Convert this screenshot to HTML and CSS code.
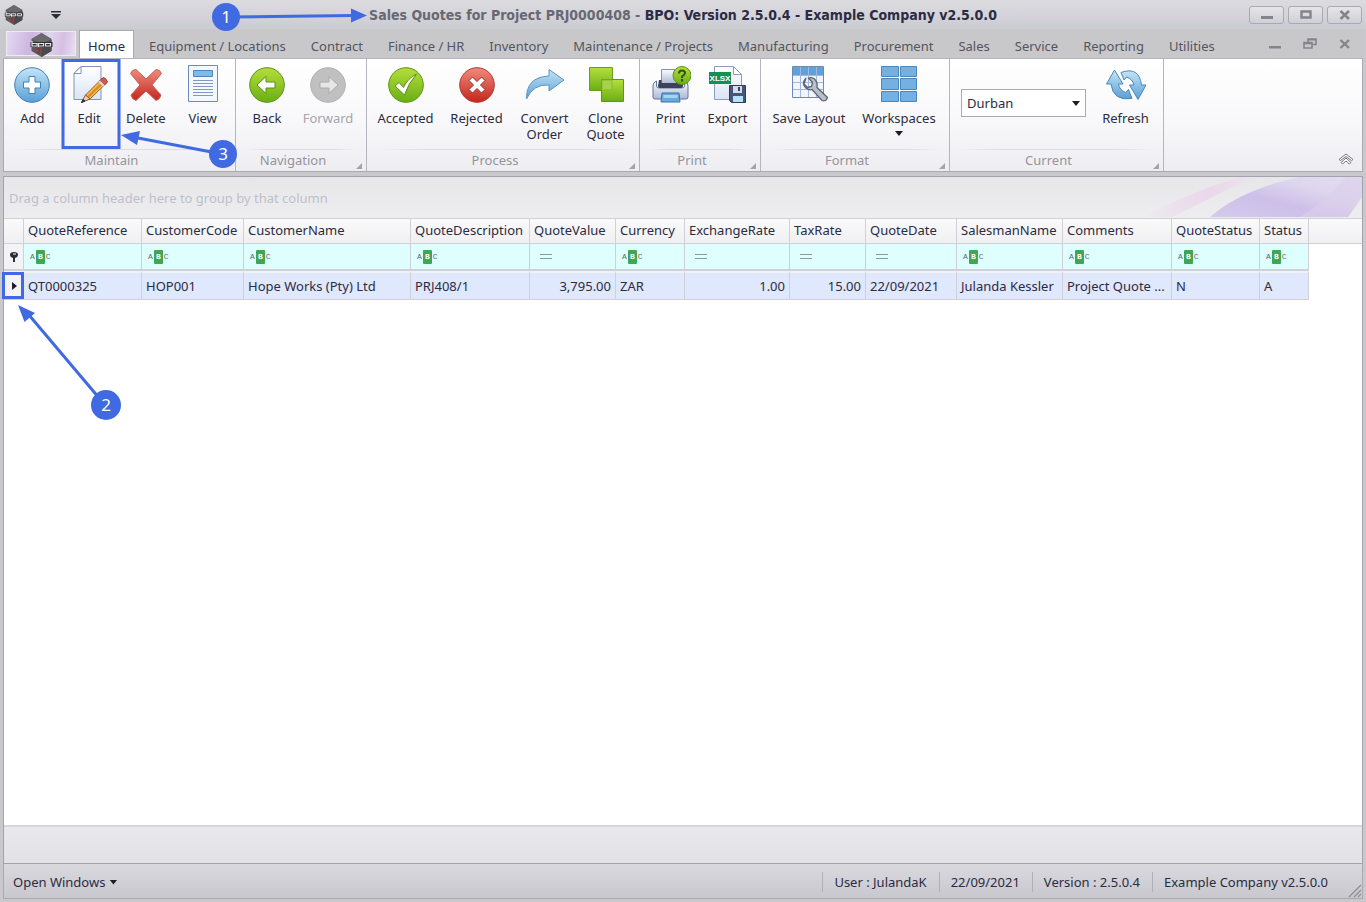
FILE: index.html
```html
<!DOCTYPE html>
<html lang="en">
<head>
    <meta charset="UTF-8">
    <meta name="viewport" content="width=device-width, initial-scale=1.0">
    <title>Sales Quotes for Project PRJ0000408</title>
    <link rel="stylesheet" href="styles.css">
</head>
<body>

<!-- shared gradients and the logo -->
<svg class="defs" width="0" height="0" aria-hidden="true">
    <defs>
        <linearGradient id="blue" x1="0" y1="0" x2="0" y2="1">
            <stop offset="0" stop-color="#c4e5f7"/><stop offset="1" stop-color="#5a9fd6"/>
        </linearGradient>
        <linearGradient id="green" x1="0" y1="0" x2="0" y2="1">
            <stop offset="0" stop-color="#b5de3c"/><stop offset="1" stop-color="#6aae14"/>
        </linearGradient>
        <linearGradient id="red" x1="0" y1="0" x2="0" y2="1">
            <stop offset="0" stop-color="#f08a7d"/><stop offset="1" stop-color="#c4261c"/>
        </linearGradient>
        <linearGradient id="paper" x1="0" y1="0" x2="0" y2="1">
            <stop offset="0" stop-color="#ffffff"/><stop offset="1" stop-color="#dbe4f4"/>
        </linearGradient>
        <linearGradient id="steel" x1="0" y1="0" x2="0" y2="1">
            <stop offset="0" stop-color="#fbfcff"/><stop offset="1" stop-color="#a9b9d6"/>
        </linearGradient>
        <symbol id="logo" viewBox="0 0 24 26">
            <path d="M12 1 22 7v12l-10 6L2 19V7z" fill="#5a5a5d"/>
            <path d="M12 1 22 7l-10 5L2 7z" fill="#6a6a6d"/>
            <path d="M12 13v12l10-6V8z" fill="#4a4a4d"/>
            <path d="M1 10h22v5H1z" fill="#2e2e31"/>
            <path d="M2.500 9v5h5v-2.500h-5M9 15v-3.500h5V14H9M16 11.500h5V14h-5z" fill="none" stroke="#e4e4e6" stroke-width="1.200"/>
            <path d="M7 17h3v4H8" fill="none" stroke="#a3272b" stroke-width="1.500"/>
        </symbol>
    </defs>
</svg>

<div class="window">
    <header class="titlebar">
        <div class="quick">
            <svg class="logo-small" width="20" height="22"><use href="#logo"/></svg>
            <button class="quick-menu" aria-label="Customize toolbar">
                <svg width="10" height="8" viewBox="0 0 10 8"><path d="M0 0h10v1.500H0zM0 3h10L5 8z" fill="#2b2b3a"/></svg>
            </button>
        </div>
        <h1><span>Sales Quotes for Project PRJ0000408 -</span> BPO: Version 2.5.0.4 - Example Company v2.5.0.0</h1>
        <div class="window-buttons">
            <button aria-label="Minimize"><svg width="14" height="12" viewBox="0 0 14 12"><path d="M1 7h12v3H1z" fill="#84848c"/></svg></button>
            <button aria-label="Maximize"><svg width="14" height="12" viewBox="0 0 14 12"><path d="M2.500 2.500h9v6h-9z" fill="none" stroke="#84848c" stroke-width="2.400"/></svg></button>
            <button aria-label="Close"><svg width="14" height="12" viewBox="0 0 14 12"><path d="M2.500 2l8.500 8m0-8l-8.500 8" stroke="#84848c" stroke-width="2.600"/></svg></button>
        </div>
    </header>

    <nav class="tabs">
        <button class="app-button" aria-label="Application menu"><svg width="25" height="26"><use href="#logo"/></svg></button>
        <a href="#" class="tab active">Home</a>
        <a href="#" class="tab">Equipment / Locations</a>
        <a href="#" class="tab">Contract</a>
        <a href="#" class="tab">Finance / HR</a>
        <a href="#" class="tab">Inventory</a>
        <a href="#" class="tab">Maintenance / Projects</a>
        <a href="#" class="tab">Manufacturing</a>
        <a href="#" class="tab">Procurement</a>
        <a href="#" class="tab">Sales</a>
        <a href="#" class="tab">Service</a>
        <a href="#" class="tab">Reporting</a>
        <a href="#" class="tab">Utilities</a>
        <div class="child-buttons">
            <button aria-label="Minimize child"><svg width="14" height="12" viewBox="0 0 14 12"><path d="M1 8h12v2.500H1z" fill="#84848c"/></svg></button>
            <button aria-label="Restore child"><svg width="14" height="12" viewBox="0 0 14 12"><path d="M5 4V1h8v5.500H9.500M1 4.500h8V10H1zM5 1.800h8M1 5.500h8" fill="none" stroke="#84848c" stroke-width="1.600"/></svg></button>
            <button aria-label="Close child"><svg width="14" height="12" viewBox="0 0 14 12"><path d="M2.500 2l8.500 8m0-8l-8.500 8" stroke="#84848c" stroke-width="2.400"/></svg></button>
        </div>
    </nav>

    <div class="ribbon">
        <section class="group maintain-group">
            <div class="items">
                <button class="btn">
                    <svg width="40" height="40" viewBox="0 0 40 40"><circle cx="20" cy="20" r="17.300" fill="url(#blue)" stroke="#4380b5"/><path d="M17 11.500h6V17h5.500v6H23v5.500h-6V23h-5.500v-6H17z" fill="#fff" stroke="#3f80b6"/></svg>
                    Add
                </button>
                <button class="btn">
                    <svg width="40" height="40" viewBox="0 0 40 40"><path d="M12 1.500h20v33H5v-26z" fill="url(#paper)" stroke="#8093b8"/><path d="M5 8.500l7-7v7z" fill="#fff" stroke="#8093b8"/><path d="M16.500 30 33 13.500l4.500 4.500L21 34z" fill="#f4b64a" stroke="#a0642a"/><path d="M19 32l16.500-16" stroke="#d98a22" stroke-width="2"/><path d="M31 15.500l3-3q3 0 4.500 4.500l-3 3z" fill="#d9574f" stroke="#9b3e40"/><path d="M29.500 17l1.500-1.500 4.500 4.500-1.500 1.500z" fill="#d7dbe6"/><path d="M16.500 30l-4 7.500 8.500-3.500z" fill="#efd2a5" stroke="#7a5a3c"/><path d="M14 34.500l-1.500 3 3.500-1.500z" fill="#2f2f38" stroke="#2f2f38"/></svg>
                    Edit
                </button>
                <button class="btn">
                    <svg width="40" height="40" viewBox="0 0 40 40"><path d="M10 4.500 20 14 30 4.500q4 0 5.500 4L26 20l9 10q-1 4.500-5 5.500L20 26l-10 9.500q-4-1-5-5.500l9-10L4.500 8.500q1.500-4 5.500-4z" fill="url(#red)" stroke="#c4605a" stroke-linejoin="round"/></svg>
                    Delete
                </button>
                <button class="btn">
                    <svg width="40" height="40" viewBox="0 0 40 40"><path d="M5.500 .500h29v36h-29z" fill="#f3f8ff" stroke="#6d8cbd"/><path d="M10.500 5.500h19v6h-19z" fill="#7fbbe6" stroke="#4f86bd"/><path d="M10 15.500h20M10 18.500h20M10 21.500h20M10 24.500h20M10 27.500h20M10 30.500h20" stroke="#8398c0"/></svg>
                    View
                </button>
            </div>
            <div class="caption">Maintain</div>
        </section>

        <section class="group nav-group">
            <div class="items">
                <button class="btn">
                    <svg width="40" height="40" viewBox="0 0 40 40"><circle cx="20" cy="20" r="17.300" fill="url(#green)" stroke="#5a9312"/><path d="M10 20l9-8.500V17h9v6h-9v5.500z" fill="#fff" stroke="#5a8f17"/></svg>
                    Back
                </button>
                <button class="btn" disabled>
                    <svg width="40" height="40" viewBox="0 0 40 40"><circle cx="20" cy="20" r="17.300" fill="#c0c0c1" stroke="#b1b1b2"/><path d="M30 20l-9-8.500V17h-9v6h9v5.500z" fill="#e6e6e7" stroke="#aaaaab"/></svg>
                    Forward
                </button>
            </div>
            <div class="caption">Navigation<i class="corner"></i></div>
        </section>

        <section class="group process-group">
            <div class="items">
                <button class="btn medium">
                    <svg width="40" height="40" viewBox="0 0 40 40"><circle cx="20" cy="20" r="17.300" fill="url(#green)" stroke="#5a9312"/><path d="M9 21l4-3.500 4.500 5q4-9 13-13.500-8.500 10-12 21z" fill="#fff" stroke="#5a8f17"/></svg>
                    Accepted
                </button>
                <button class="btn medium">
                    <svg width="40" height="40" viewBox="0 0 40 40"><circle cx="20" cy="20" r="17.300" fill="url(#red)" stroke="#b03a33"/><path d="M15.500 12l4.500 4.500 4.500-4.500 3.500 3.500-4.500 4.500 4.500 4.500-3.500 3.500-4.500-4.500-4.500 4.500-3.500-3.500 4.500-4.500-4.500-4.500z" fill="#fff" stroke="#9e2a26"/></svg>
                    Rejected
                </button>
                <button class="btn convert">
                    <svg width="40" height="40" viewBox="0 0 40 40"><path d="M1.500 34Q1 12 24 11V4.500L39 15 24 26v-6Q8 19 1.500 34z" fill="url(#blue)" stroke="#5b94c0"/></svg>
                    Convert Order
                </button>
                <button class="btn">
                    <svg width="40" height="40" viewBox="0 0 40 40"><path d="M3.500 2.500h23v23h-23z" fill="url(#green)" stroke="#6a9e1c"/><path d="M15.500 14.500h22v22h-22z" fill="url(#green)" stroke="#5f9714"/><path d="M16 15h10v10H16z" fill="#a4d24a" stroke="#86bb2e"/></svg>
                    Clone Quote
                </button>
            </div>
            <div class="caption">Process<i class="corner"></i></div>
        </section>

        <section class="group print-group">
            <div class="items">
                <button class="btn">
                    <svg width="40" height="40" viewBox="0 0 40 40"><path d="M10.500 4.500h16v14h-16z" fill="url(#steel)" stroke="#8091b3"/><path d="M5.500 16q-3.500 1-3.500 5v11q0 2 2 2h31q2 0 2-2V21q0-4-3.500-5v5q0 2-3 2h-22q-3 0-3-2z" fill="url(#steel)" stroke="#62759c"/><path d="M8 15h2.500v3h16v-3H32v6q0 2-2 2H9q-2 0-2-2z" fill="#3d4256"/><path d="M11 28h17l1 9H10z" fill="#66abdf" stroke="#4a6d9d"/><path d="M12.500 30h14v3h-14z" fill="#a5d3f2"/><circle cx="31" cy="10.500" r="9" fill="url(#green)" stroke="#5a9312"/><path d="M28 8.500q0-3 3-3t3 2.500q0 1.500-3 3.500v1.500M31 14v2.500" fill="none" stroke="#2e5510" stroke-width="2"/></svg>
                    Print
                </button>
                <button class="btn">
                    <svg width="40" height="40" viewBox="0 0 40 40"><path d="M6.500 1.500h19l8 8v25h-27z" fill="url(#paper)" stroke="#8a9dc0"/><path d="M25.500 1.500v8h8z" fill="#fff" stroke="#8a9dc0"/><path d="M1 7h22v12H1z" fill="#119155"/><text x="12" y="16" text-anchor="middle" class="xlsx">XLSX</text><path d="M21.500 20.500h16v17h-14l-2-2z" fill="#46567b" stroke="#303c59"/><path d="M25 21h9v7h-9z" fill="#d6dbe6"/><path d="M30 22h2v4h-2z" fill="#35415e"/><path d="M25 31h10v6H25z" fill="#b7e1f8"/></svg>
                    Export
                </button>
            </div>
            <div class="caption">Print<i class="corner"></i></div>
        </section>

        <section class="group format-group">
            <div class="items">
                <button class="btn wide">
                    <svg width="40" height="40" viewBox="0 0 40 40"><path d="M3.500 1.500h31v31h-31z" fill="#f0f5ff" stroke="#6f88b5"/><path d="M4 2h30v8H4z" fill="#5fa2d9"/><path d="M11.500 2v30M19.500 2v30M27.500 2v30M4 10.500h30M4 17.500h30M4 24.500h30" stroke="#a2b9dc"/><path d="M17 13q-5 6 0 10 3 2.500 6 1.500l10 11q4 1.500 5.500-3L28 22.500q1-5-2.500-8.500-3-2-6-1l4 4.500-1 4-4 1-3.500-3.500z" fill="#b9bfca" stroke="#5c6475" stroke-width="1.300"/></svg>
                    Save Layout
                </button>
                <button class="btn wide">
                    <svg width="40" height="40" viewBox="0 0 40 40"><g fill="#74b0e1" stroke="#4d86bb"><path d="M2.500 1.500h17v10h-17zM21.500 1.500h16v10h-16zM2.500 13.500h17v11h-17zM21.500 13.500h16v11h-16zM2.500 26.500h17v10h-17zM21.500 26.500h16v10h-16z"/></g></svg>
                    Workspaces
                    <i class="arrow"></i>
                </button>
            </div>
            <div class="caption">Format<i class="corner"></i></div>
        </section>

        <section class="group current-group">
            <div class="items">
                <div class="site">
                    <select aria-label="Site"><option>Durban</option></select>
                    <i class="arrow"></i>
                </div>
                <button class="btn">
                    <svg width="40" height="40" viewBox="0 0 40 40"><path d="M8.500 5 17 19h-4.500q1 6 7 8.500l3-3 3.500 9q-19 3-21-14.500H.500z" fill="url(#blue)" stroke="#4c89bb"/><path d="M15 7.500Q33 1 35.500 20H40L32 34.500 23.500 20H28q-1.500-6-7.500-8L18 15z" fill="url(#blue)" stroke="#4c89bb"/></svg>
                    Refresh
                </button>
            </div>
            <div class="caption">Current<i class="corner"></i></div>
        </section>

        <button class="collapse" aria-label="Collapse ribbon">
            <svg width="16" height="12" viewBox="0 0 16 12"><path d="M1 6.500L8 1l7 5.500-1.500 1L8 3.500l-5.500 4zM3 9.500L8 5l5 4.500-1.500 1.500L8 8l-3.500 3z" fill="#fff" stroke="#77777f"/></svg>
        </button>
    </div>

    <main class="grid">
        <div class="group-panel">
            Drag a column header here to group by that column
            <svg class="swoosh" width="240" height="40" viewBox="0 0 240 40">
                <defs>
                    <linearGradient id="pink" x1="0" y1="0" x2="1" y2="0"><stop offset="0" stop-color="#ecd5ec" stop-opacity="0"/><stop offset=".6" stop-color="#ead8ea"/><stop offset="1" stop-color="#ece4ef"/></linearGradient>
                    <linearGradient id="violet" x1="0" y1="1" x2="1" y2="0"><stop offset="0" stop-color="#d5cbed"/><stop offset=".4" stop-color="#cdbfe9"/><stop offset=".7" stop-color="#ded6ee"/><stop offset="1" stop-color="#e3dcf0"/></linearGradient>
                </defs>
                <path d="M20 40Q80 10 120 0h12Q90 20 50 40z" fill="url(#pink)"/>
                <path d="M88 40Q120 12 178 0h62v20l-14 20z" fill="url(#violet)"/>
                <path d="M178 40q26-16 46-40h16v20l-14 20z" fill="#dccfe9" opacity=".6"/>
            </svg>
        </div>
        <table>
            <colgroup>
                <col class="c-mark"><col class="c-ref"><col class="c-code"><col class="c-name"><col class="c-desc"><col class="c-value"><col class="c-curr"><col class="c-rate"><col class="c-tax"><col class="c-date"><col class="c-sales"><col class="c-comm"><col class="c-qstat"><col class="c-stat"><col>
            </colgroup>
            <thead>
                <tr>
                    <th></th>
                    <th>QuoteReference</th>
                    <th>CustomerCode</th>
                    <th>CustomerName</th>
                    <th>QuoteDescription</th>
                    <th>QuoteValue</th>
                    <th>Currency</th>
                    <th>ExchangeRate</th>
                    <th>TaxRate</th>
                    <th>QuoteDate</th>
                    <th>SalesmanName</th>
                    <th>Comments</th>
                    <th>QuoteStatus</th>
                    <th>Status</th>
                    <th class="rest"></th>
                </tr>
            </thead>
            <tbody>
                <tr class="filter">
                    <td class="mark"><svg width="8" height="10" viewBox="0 0 8 10"><path d="M0 2.500Q0 0 4 0t4 2.500Q8 5 5 6v4H3V6Q0 5 0 2.500z" fill="#2b2b3a"/><path d="M3 1.500h3v1H3z" fill="#fff"/></svg></td>
                    <td><span class="abc">A<b>B</b>C</span></td>
                    <td><span class="abc">A<b>B</b>C</span></td>
                    <td><span class="abc">A<b>B</b>C</span></td>
                    <td><span class="abc">A<b>B</b>C</span></td>
                    <td><span class="equals"></span></td>
                    <td><span class="abc">A<b>B</b>C</span></td>
                    <td><span class="equals"></span></td>
                    <td><span class="equals"></span></td>
                    <td><span class="equals"></span></td>
                    <td><span class="abc">A<b>B</b>C</span></td>
                    <td><span class="abc">A<b>B</b>C</span></td>
                    <td><span class="abc">A<b>B</b>C</span></td>
                    <td><span class="abc">A<b>B</b>C</span></td>
                    <td class="rest"></td>
                </tr>
                <tr class="selected">
                    <td class="mark"><svg width="5" height="8" viewBox="0 0 5 8"><path d="M0 0l5 4-5 4z" fill="#1d1d2c"/></svg></td>
                    <td>QT0000325</td>
                    <td>HOP001</td>
                    <td>Hope Works (Pty) Ltd</td>
                    <td>PRJ408/1</td>
                    <td class="num">3,795.00</td>
                    <td>ZAR</td>
                    <td class="num">1.00</td>
                    <td class="num">15.00</td>
                    <td>22/09/2021</td>
                    <td>Julanda Kessler</td>
                    <td>Project Quote ...</td>
                    <td>N</td>
                    <td>A</td>
                    <td class="rest"></td>
                </tr>
            </tbody>
        </table>
        <div class="grid-footer"></div>
    </main>

    <footer class="status">
        <button class="open-windows">Open Windows <i class="arrow"></i></button>
        <span>User : JulandaK</span>
        <span>22/09/2021</span>
        <span>Version : 2.5.0.4</span>
        <span>Example Company v2.5.0.0</span>
        <svg class="grip" width="14" height="14" viewBox="0 0 14 14"><path d="M1 13L13 1M6 13l7-7M10 13l3-3" stroke="#8d8d96" stroke-width="1.300"/></svg>
    </footer>
</div>

<!-- numbered steps drawn over the window -->
<svg class="steps" width="1366" height="902" viewBox="0 0 1366 902">
    <g stroke="#4169e1" stroke-width="3" fill="none">
        <path d="M226 17l128-1.500M222 154l-84-16M105 405L29 315"/>
        <path d="M63 60.500h56v87H63zM3.500 273.500h19v24h-19z"/>
    </g>
    <g fill="#4169e1">
        <path d="M367 15.500l-16 7v-14zM121 135l19-4-3 14zM18 305l17 8-10.500 9z"/>
        <circle cx="226" cy="17" r="14"/>
        <circle cx="223" cy="154" r="14"/>
        <circle cx="106" cy="405" r="15"/>
    </g>
    <g class="step-number">
        <text x="226" y="23">1</text>
        <text x="223" y="160">3</text>
        <text x="106" y="411">2</text>
    </g>
</svg>

</body>
</html>
```
FILE: styles.css
```css
* {
    box-sizing: border-box;
}
body {
    margin: 0;
    font-family: "Noto Sans", sans-serif;
    font-size: 13px;
    line-height: 16px;
    color: #2b2b42;
}
button {
    padding: 0;
    border: 0;
    background: none;
    font: inherit;
    color: inherit;
}
svg {
    display: block;
}
.defs {
    position: absolute;
}
.window {
    display: flex;
    flex-direction: column;
    min-height: 100vh;
    padding: 0 3px 3px;
    background: #c8c8cd;
}

/* title bar */
.titlebar {
    display: flex;
    align-items: center;
    height: 29px;
    margin: 0 -3px;
    background: linear-gradient(#dcdce0, #cbcbd2);
}
.quick, .window-buttons {
    flex: 1;
    display: flex;
    align-items: center;
}
.quick {
    gap: 27px;
    padding-left: 4px;
}
.titlebar h1 {
    margin: 0;
    font-family: "DejaVu Sans Condensed", sans-serif;
    font-size: 14px;
    white-space: nowrap;
}
.titlebar h1 span {
    color: #686872;
}
.window-buttons {
    justify-content: flex-end;
    gap: 4px;
    padding-right: 4px;
}
.window-buttons button {
    display: flex;
    justify-content: center;
    align-items: center;
    width: 35px;
    height: 18px;
    border: 1px solid #a9a9b2;
    border-radius: 3px;
    background: linear-gradient(#e6e6e9, #cfcfd5);
}

/* tabs */
.tabs {
    display: flex;
    height: 29px;
    background: #c8c8cb;
}
.app-button {
    display: flex;
    justify-content: center;
    width: 70px;
    height: 25px;
    margin: 2px 3px 0;
    border: 1px solid #eeeaf4;
    background: linear-gradient(100deg, #e3d9ef, #cdb5e0 35%, #e0d6ee 60%, #d5bfe2 80%, #e8dff1);
}
.tab {
    padding: 9px 13px 0 12px;
    color: #55555f;
    text-decoration: none;
    white-space: nowrap;
}
.tab.active {
    width: 55px;
    margin: 1px 3px 0 0;
    padding: 7px 0 0;
    border: 1px solid #a9a9b2;
    border-bottom: 0;
    background: #fff;
    color: #2b2b42;
    text-align: center;
}
.child-buttons {
    display: flex;
    align-items: center;
    gap: 21px;
    margin-left: auto;
    padding-right: 11px;
}

/* ribbon */
.ribbon {
    display: flex;
    height: 114px;
    border: 1px solid #a9a9b2;
    border-top-color: #b4b4bb;
    background: linear-gradient(#fff, #f9f9fb 50%, #eeeef2);
}
.group {
    display: flex;
    flex-direction: column;
    width: 232px;
    border-right: 1px solid #b5b5bd;
}
.nav-group {
    width: 131px;
}
.process-group {
    width: 273px;
}
.print-group {
    width: 121px;
}
.format-group {
    width: 189px;
}
.current-group {
    width: 214px;
}
.items {
    display: flex;
    justify-content: center;
    height: 89px;
    padding-right: 2px;
}
.maintain-group .items {
    padding-right: 4px;
}
.nav-group .items {
    padding-right: 7px;
}
.btn {
    display: flex;
    flex-direction: column;
    align-items: center;
    width: 57px;
    padding-top: 6px;
}
.btn svg {
    margin-bottom: 5px;
}
.btn:disabled {
    color: #a5a5ad;
}
.nav-group .btn {
    width: 61px;
}
.btn.medium {
    width: 71px;
}
.btn.convert {
    width: 65px;
}
.btn.wide {
    width: 90px;
}
.arrow {
    width: 8px;
    height: 5px;
    background: #1d1d2c;
    clip-path: polygon(0 0, 100% 0, 50% 100%);
}
.btn .arrow {
    margin-top: 5px;
}
.caption {
    position: relative;
    padding: 4px 16px 2px 0;
    color: #94949d;
    text-align: center;
}
.caption::before {
    content: "";
    position: absolute;
    top: 1px;
    left: 10px;
    right: 10px;
    height: 1px;
    background: linear-gradient(90deg, transparent, #dcdce2 20%, #dcdce2 80%, transparent);
}
.corner {
    position: absolute;
    right: 4px;
    bottom: 1px;
    width: 6px;
    height: 6px;
    background: #a3a3aa;
    clip-path: polygon(100% 0, 100% 100%, 0 100%);
}
.current-group .items {
    justify-content: flex-start;
    gap: 11px;
    padding-left: 11px;
}
.site {
    position: relative;
    width: 125px;
    padding-top: 30px;
}
.site select {
    appearance: none;
    display: block;
    width: 100%;
    height: 28px;
    padding: 0 5px;
    border: 1px solid #a9a9b2;
    border-radius: 0;
    background: #fff;
    font: inherit;
    color: inherit;
}
.site .arrow {
    position: absolute;
    top: 42px;
    right: 6px;
}
.collapse {
    align-self: flex-end;
    margin: 0 8px 6px auto;
}

/* data grid */
.grid {
    flex: 1;
    display: flex;
    flex-direction: column;
    margin-top: 4px;
    border: 1px solid #a3a3ad;
    background: #fff;
}
.group-panel {
    position: relative;
    height: 41px;
    padding: 13px 5px 0;
    background: linear-gradient(#e7e7ea, #ededf0);
    color: #bfbfc9;
}
.swoosh {
    position: absolute;
    top: 0;
    right: 0;
}
table {
    width: 100%;
    table-layout: fixed;
    border-collapse: separate;
    border-spacing: 0;
}
.c-mark { width: 20px; }
.c-ref { width: 118px; }
.c-code { width: 102px; }
.c-name { width: 167px; }
.c-desc { width: 119px; }
.c-value { width: 86px; }
.c-curr { width: 69px; }
.c-rate { width: 105px; }
.c-tax { width: 76px; }
.c-date { width: 91px; }
.c-sales { width: 106px; }
.c-comm { width: 109px; }
.c-qstat { width: 88px; }
.c-stat { width: 49px; }
th, td {
    padding: 0 4px;
    border-right: 1px solid #d0d0d8;
    border-bottom: 1px solid #d0d0d8;
    text-align: left;
    font-weight: normal;
    white-space: nowrap;
}
th {
    height: 26px;
    padding-bottom: 2px;
    border-top: 1px solid #d0d0d8;
    background: linear-gradient(#fafafb, #f0f0f2);
}
th.rest {
    border-right: 0;
}
.filter td {
    height: 27px;
    background: #dfffff;
    border-bottom: 2px solid #d0d0d8;
}
.selected td {
    height: 29px;
    border-top: 2px solid #f2f2f6;
    background: #e0e8fd;
}
.num {
    text-align: right;
}
.filter .mark, .selected .mark {
    padding: 0 6px;
    background: #f3f3f5;
}
.selected .mark {
    padding-left: 8px;
}
.filter td.rest, .selected td.rest {
    border: 0;
    background: #fff;
}
.abc {
    display: flex;
    align-items: center;
    gap: 1px;
    padding-left: 2px;
    font: 8px/14px "Liberation Mono", monospace;
    color: #5b6b6b;
}
.abc b {
    width: 9px;
    border-radius: 1px;
    background: #3fa653;
    color: #fff;
    text-align: center;
}
.equals {
    display: block;
    width: 12px;
    height: 5px;
    margin-left: 6px;
    border: 1px solid #8b9a9d;
    border-width: 1px 0;
}
.grid-footer {
    height: 38px;
    margin-top: auto;
    border-top: 2px solid #d6d6dc;
    background: linear-gradient(#e9e9ec, #e2e2e6);
}

/* status bar */
.status {
    display: flex;
    align-items: center;
    height: 35px;
    padding-top: 2px;
    border: 1px solid #a9a9b2;
    border-top: 0;
    background: linear-gradient(#d9d9de, #c8c8ce);
}
.open-windows {
    display: flex;
    align-items: center;
    gap: 4px;
    margin-right: auto;
    padding-left: 9px;
}
.status span {
    padding: 2px 12px 2px 11px;
    border-left: 1px solid #b0b0b8;
}
.grip {
    align-self: flex-end;
    margin-left: 8px;
}

.steps {
    position: absolute;
    top: 0;
    left: 0;
    pointer-events: none;
}
.step-number {
    fill: #fff;
    font: 17px "Noto Sans", sans-serif;
    text-anchor: middle;
}
.xlsx {
    fill: #fff;
    font: bold 8px "Liberation Sans", sans-serif;
}
```
